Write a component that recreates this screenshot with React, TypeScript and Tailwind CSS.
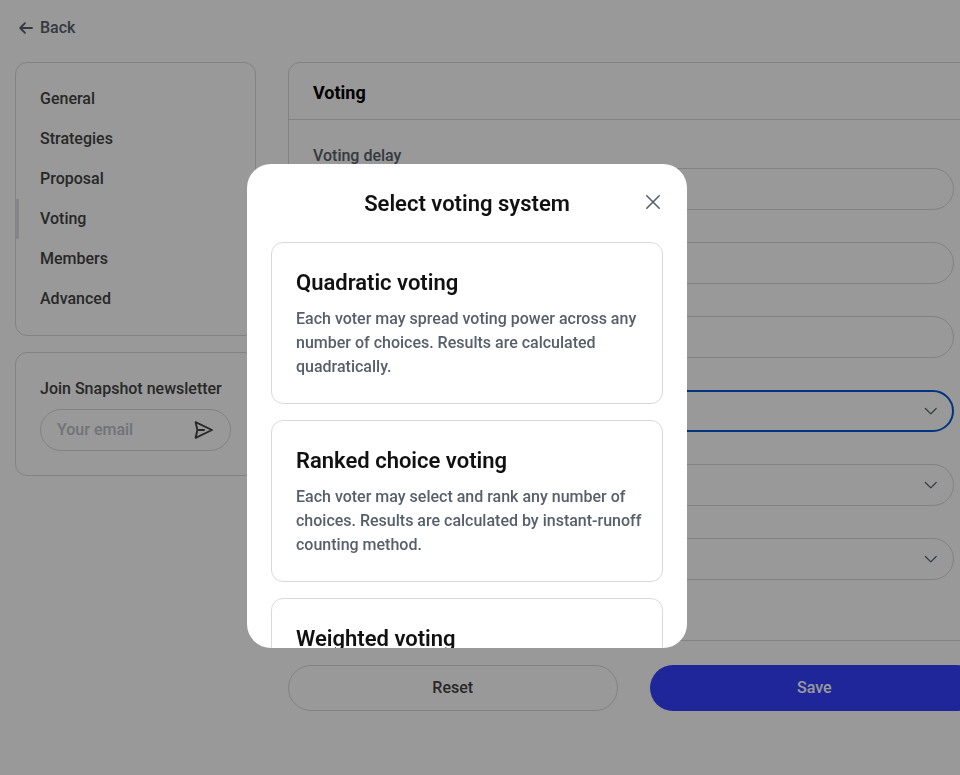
import type { ReactNode } from "react";

const navItems = ["General", "Strategies", "Proposal", "Voting", "Members", "Advanced"];

const systems = [
  {
    title: "Quadratic voting",
    text: "Each voter may spread voting power across any number of choices. Results are calculated quadratically.",
  },
  {
    title: "Ranked choice voting",
    text: "Each voter may select and rank any number of choices. Results are calculated by instant-runoff counting method.",
  },
  {
    title: "Weighted voting",
    text: "Each voter may spread voting power across any number of choices.",
  },
];

function ChevronDown() {
  return (
    <svg
      viewBox="0 0 14 14"
      className="pointer-events-none absolute right-4 top-3.5 size-3.5 text-[#57606a]"
      fill="none"
      stroke="currentColor"
      strokeWidth="1.2"
      aria-hidden="true"
    >
      <path d="M1.4 4.5 6.8 9.9l5.4-5.4" strokeLinejoin="round" strokeLinecap="round" />
    </svg>
  );
}

function Field({ id, label, children }: { id: string; label: string; children: ReactNode }) {
  return (
    <div>
      <label htmlFor={id} className="block text-[#57606a]">
        {label}
      </label>
      <div className="relative">{children}</div>
    </div>
  );
}

function TextField({ id, label }: { id: string; label: string }) {
  return (
    <Field id={id} label={label}>
      <input
        id={id}
        type="text"
        className="block h-[42px] w-full rounded-full border border-[#d9d9d9] bg-white px-4 outline-none"
      />
    </Field>
  );
}

function SelectField({ id, label, value, active }: { id: string; label: string; value: string; active?: boolean }) {
  return (
    <Field id={id} label={label}>
      <select
        id={id}
        className={
          active
            ? "block h-[42px] w-full appearance-none rounded-full border-2 border-[#0058d6] bg-white px-4 outline-none"
            : "block h-[42px] w-full appearance-none rounded-full border border-[#d9d9d9] bg-white px-4 outline-none"
        }
      >
        <option>{value}</option>
      </select>
      <ChevronDown />
    </Field>
  );
}

function Sidebar() {
  return (
    <aside className="flex w-[241px] shrink-0 flex-col gap-4">
      <nav className="rounded-xl border border-[#d9d9d9] py-4">
        {navItems.map((item) => (
          <a
            key={item}
            href="#"
            className={
              item === "Voting"
                ? "block border-l-[3px] border-[#dddfe6] py-2 pl-[21px]"
                : "block py-2 pl-6"
            }
          >
            {item}
          </a>
        ))}
      </nav>
      <form className="rounded-xl border border-[#d9d9d9] p-6">
        <label htmlFor="email" className="block">
          Join Snapshot newsletter
        </label>
        <div className="mt-2 flex h-[42px] items-center rounded-full border border-[#d9d9d9] px-4">
          <input
            id="email"
            type="email"
            placeholder="Your email"
            className="w-full min-w-0 flex-1 outline-none placeholder:text-[#bcbfc6]"
          />
          <button type="button" aria-label="Subscribe">
            <svg
              viewBox="0 0 22 22"
              className="size-[22px]"
              fill="none"
              stroke="currentColor"
              strokeWidth="1.9"
              strokeLinejoin="round"
              strokeLinecap="round"
            >
              <path d="M3.6 3.2 20 11 3.6 18.8 5.4 11ZM5.4 11h6.6" />
            </svg>
          </button>
        </div>
      </form>
    </aside>
  );
}

function VotingSettings() {
  return (
    <main className="min-w-0 flex-1">
      <section className="rounded-xl border border-[#d9d9d9]">
        <h2 className="border-b border-[#d9d9d9] px-6 pb-3.5 pt-[18px] text-lg leading-6 font-bold text-black">
          Voting
        </h2>
        <div className="flex flex-col gap-2 px-6 pb-[60px] pt-6">
          <TextField id="delay" label="Voting delay" />
          <TextField id="period" label="Voting period" />
          <TextField id="quorum" label="Quorum" />
          <SelectField id="type" label="Type" value="Any" active />
          <SelectField id="privacy" label="Privacy" value="Any" />
          <SelectField id="validation" label="Validation" value="Default" />
        </div>
      </section>
      <div className="mt-6 grid grid-cols-2 gap-8">
        <button type="button" className="h-[46px] rounded-full border border-[#d9d9d9]">
          Reset
        </button>
        <button type="button" className="h-[46px] rounded-full bg-[#3340ff] text-white">
          Save
        </button>
      </div>
    </main>
  );
}

function VotingSystemDialog() {
  return (
    <div className="fixed inset-0 flex items-start justify-center bg-black/40 pr-[26px] pt-[164px]">
      <div
        role="dialog"
        aria-modal="true"
        aria-labelledby="dialog-title"
        className="flex h-[484px] w-[440px] flex-col overflow-hidden rounded-3xl bg-white"
      >
        <header className="relative px-6 pb-[22px] pt-6">
          <h3 id="dialog-title" className="text-center text-[22px] leading-8 font-semibold text-[#111]">
            Select voting system
          </h3>
          <button type="button" aria-label="Close" className="absolute right-6 top-7 text-[#57606a]">
            <svg viewBox="0 0 20 20" className="size-5" fill="none" stroke="currentColor" strokeWidth="1.6" strokeLinecap="round">
              <path d="M3.8 3.8 16.2 16.2M16.2 3.8 3.8 16.2" />
            </svg>
          </button>
        </header>
        <div className="flex min-h-0 flex-1 flex-col gap-4 overflow-y-auto px-6 [scrollbar-width:none]">
          {systems.map((system) => (
            <button
              key={system.title}
              type="button"
              className="shrink-0 rounded-xl border border-[#d9d9d9] py-6 pl-6 pr-4 text-left"
            >
              <span className="block text-[22px] leading-8 font-semibold text-[#111]">{system.title}</span>
              <span className="mt-2 block text-[#57606a]">{system.text}</span>
            </button>
          ))}
        </div>
      </div>
    </div>
  );
}

export default function App() {
  return (
    <div className="h-screen overflow-hidden bg-white font-['Roboto',sans-serif] text-base font-medium text-[#444]">
      <div className="min-w-[979px] pl-[15px] pt-4">
        <a href="#" className="flex h-6 w-fit items-center gap-1.5 pl-[3px] text-[#57606a]">
          <svg
            viewBox="0 0 16 16"
            className="size-4"
            fill="none"
            stroke="currentColor"
            strokeWidth="1.9"
            strokeLinecap="round"
            strokeLinejoin="round"
            aria-hidden="true"
          >
            <path d="M7 3.2 2.2 8 7 12.8M2.2 8h11.8" />
          </svg>
          Back
        </a>
        <div className="mt-[22px] flex items-start gap-8">
          <Sidebar />
          <VotingSettings />
        </div>
      </div>
      <VotingSystemDialog />
    </div>
  );
}
